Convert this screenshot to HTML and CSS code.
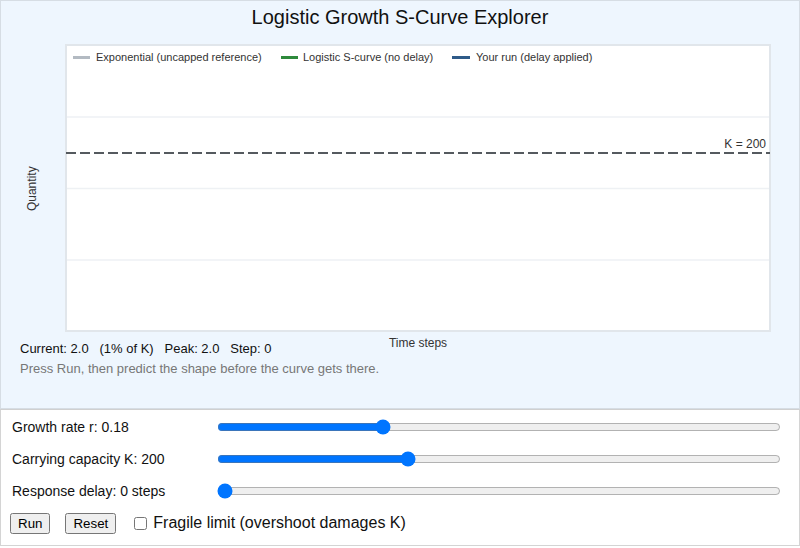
FILE: index.html
```html
<!DOCTYPE html>
<html lang="en">
<head>
<meta charset="utf-8">
<title>Logistic Growth S-Curve Explorer</title>
<link rel="stylesheet" href="styles.css">
</head>
<body>
<div class="app">
  <section class="stage">
    <h1 class="title">Logistic Growth S-Curve Explorer</h1>
    <svg class="chart" width="798" height="302" viewBox="1 36 798 302" xmlns="http://www.w3.org/2000/svg">
      <rect x="66" y="45" width="704" height="286" fill="#ffffff" stroke="#e1e6eb" stroke-width="2"/>
      <line x1="67" y1="117" x2="769" y2="117" stroke="#eef1f4" stroke-width="1.5"/>
      <line x1="67" y1="188.5" x2="769" y2="188.5" stroke="#eef1f4" stroke-width="1.5"/>
      <line x1="67" y1="260" x2="769" y2="260" stroke="#eef1f4" stroke-width="1.5"/>
      <line x1="66" y1="153" x2="770" y2="153" stroke="#555a5f" stroke-width="2" stroke-dasharray="10 4"/>
      <text x="766" y="147.5" class="klabel" text-anchor="end">K = 200</text>
      <line x1="73" y1="57.5" x2="90" y2="57.5" stroke="#b3bac2" stroke-width="3"/>
      <text x="96" y="61" class="legend">Exponential (uncapped reference)</text>
      <line x1="281" y1="57.5" x2="298" y2="57.5" stroke="#2e8a3c" stroke-width="3"/>
      <text x="303" y="61" class="legend">Logistic S-curve (no delay)</text>
      <line x1="452" y1="57.5" x2="470" y2="57.5" stroke="#2f5b89" stroke-width="3"/>
      <text x="476" y="61" class="legend">Your run (delay applied)</text>
      <text x="36.5" y="188.7" class="axis" text-anchor="middle" transform="rotate(-90 36.5 188.7)">Quantity</text>
      <text x="418" y="346.5" class="axis" text-anchor="middle">Time steps</text>
    </svg>
    <div class="status">Current: 2.0   (1% of K)   Peak: 2.0   Step: 0</div>
    <div class="hint">Press Run, then predict the shape before the curve gets there.</div>
  </section>
  <section class="controls">
    <label class="ctl-label" for="r">Growth rate r: 0.18</label>
    <input id="r" class="slider" type="range" min="0.05" max="0.5" step="0.01" value="0.18">
    <label class="ctl-label" for="k">Carrying capacity K: 200</label>
    <input id="k" class="slider" type="range" min="50" max="500" step="10" value="200">
    <label class="ctl-label" for="d">Response delay: 0 steps</label>
    <input id="d" class="slider" type="range" min="0" max="20" step="1" value="0">
    <div class="actions">
      <button type="button" class="btn btn-run">Run</button>
      <button type="button" class="btn btn-reset">Reset</button>
      <label class="fragile"><input type="checkbox" class="check">Fragile limit (overshoot damages K)</label>
    </div>
  </section>
</div>
</body>
</html>
```
FILE: styles.css
```css
* { box-sizing: border-box; }
html, body { margin: 0; padding: 0; background: #ffffff; }
body {
  font-family: "Liberation Sans", Arial, Helvetica, sans-serif;
  color: #111;
  width: 800px;
  height: 548px;
  overflow: hidden;
}
.stage {
  height: 409px;
  background: #eef6fe;
  border: 1px solid #d6dde4;
}
.title {
  margin: 0;
  font-size: 20px;
  font-weight: normal;
  line-height: 32px;
  padding-bottom: 3px;
  text-align: center;
  color: #111;
}
.chart { display: block; overflow: visible; }
.chart .legend { font-family: "Liberation Sans", Arial, sans-serif; font-size: 11px; fill: #333; }
.chart .klabel { font-family: "Liberation Sans", Arial, sans-serif; font-size: 12px; fill: #333; }
.chart .axis { font-family: "Liberation Sans", Arial, sans-serif; font-size: 12px; fill: #333; }
.status {
  margin-top: 3px;
  padding-left: 19px;
  font-size: 13px;
  line-height: 16px;
  white-space: pre;
  color: #111;
}
.hint {
  margin-top: 4px;
  padding-left: 19px;
  font-size: 13px;
  line-height: 16px;
  color: #777;
}
.controls {
  height: 137px;
  border: 1px solid #d4d4d4;
  border-top-color: #d0d0d0;
  padding: 1px 18px 0 11px;
  display: grid;
  grid-template-columns: 205px 1fr;
  grid-auto-rows: 32px;
  align-items: center;
}
.ctl-label { font-size: 14px; color: #111; }
.slider { width: 100%; margin: 0; }
.actions {
  grid-column: 1 / -1;
  height: 30px;
  display: flex;
  align-items: center;
  margin-left: -2px;
}
.btn {
  font-family: "Liberation Sans", Arial, sans-serif;
  font-size: 13.33px;
  margin: 0 15px 0 0;
}
.fragile {
  font-size: 16px;
  display: flex;
  align-items: center;
  color: #111;
}
.check { margin: 0 6px 0 3px; width: 13px; height: 13px; }
```
